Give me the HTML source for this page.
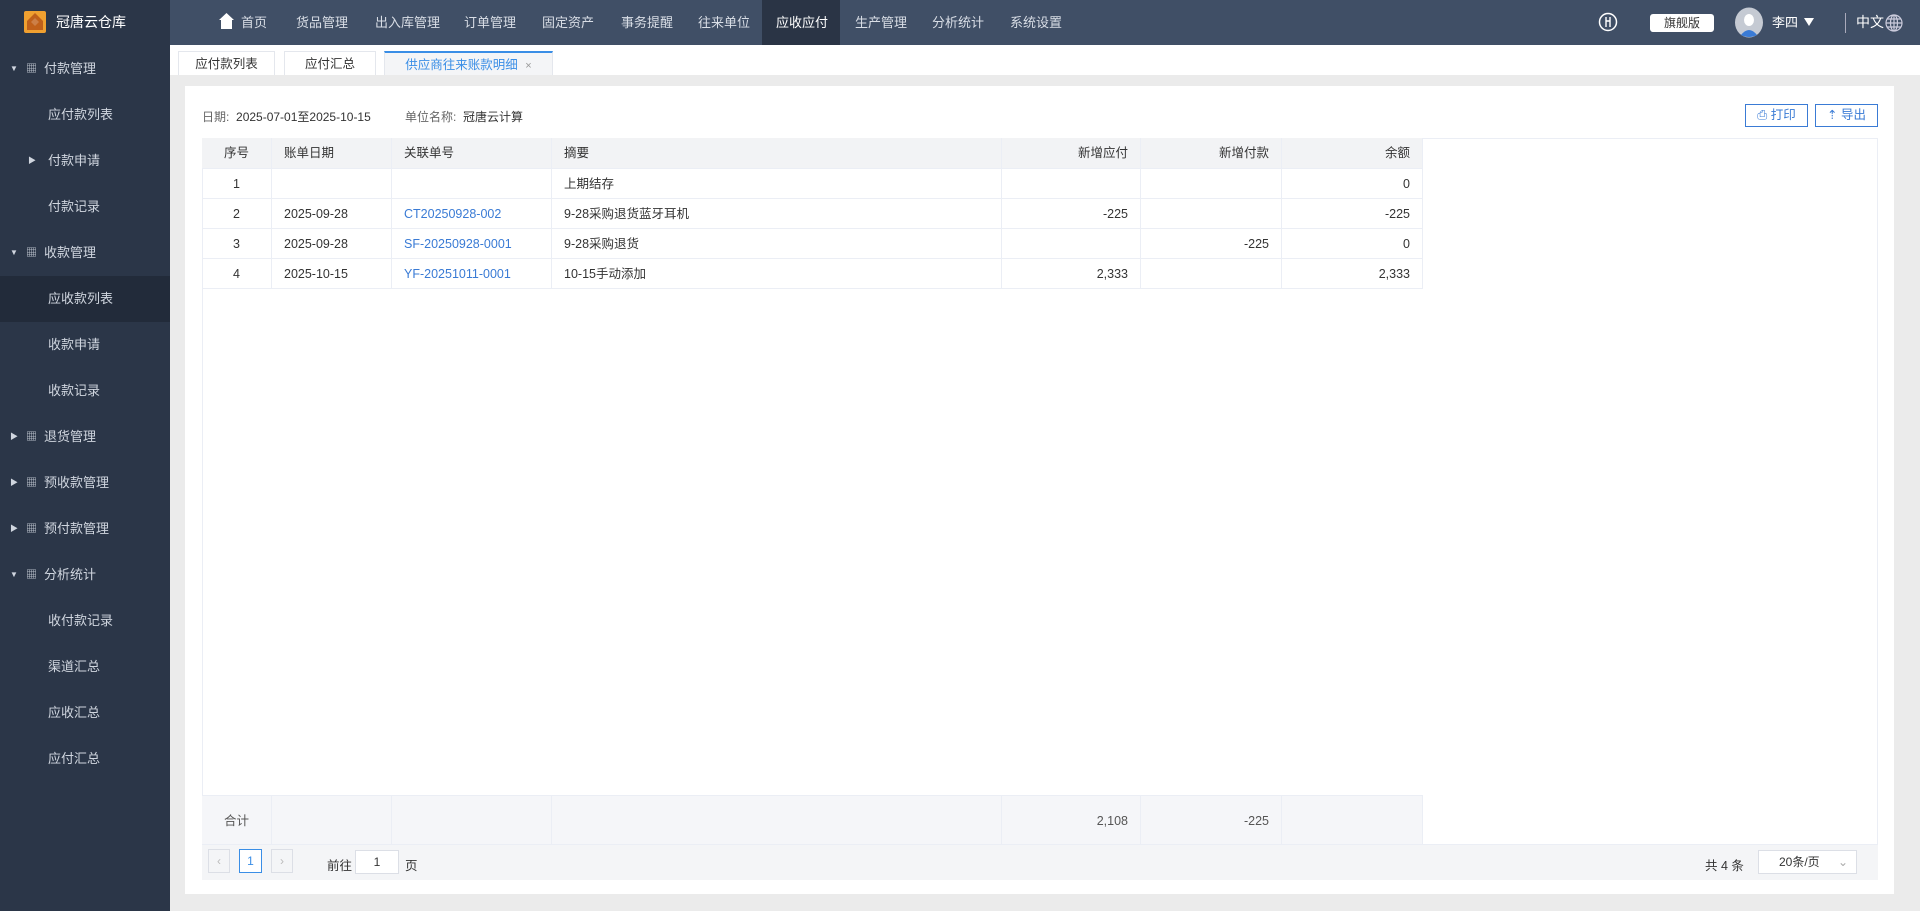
<!DOCTYPE html>
<html><head><meta charset="utf-8"><style>
*{box-sizing:border-box;margin:0;padding:0}
body{width:1920px;height:911px;overflow:hidden;font-family:"Liberation Sans","Noto Sans CJK SC",sans-serif;font-size:13px;color:#333;background:#ebebeb;position:relative}
.top{position:absolute;left:0;top:0;width:1920px;height:45px;background:#404f66}
.logo{position:absolute;left:0;top:0;width:170px;height:45px;background:#2b3648;color:#fff;font-size:14px}
.nav span{position:absolute;top:0;height:45px;line-height:45px;color:#d9dee6;font-size:13px}
.side{position:absolute;left:0;top:45px;width:170px;height:866px;background:#2b3648}
.si{position:absolute;left:0;width:170px;height:46px;line-height:46px;color:#d0d6df;font-size:13px}
.tabs{position:absolute;left:170px;top:45px;width:1750px;height:30px;background:#fff}
.tab{position:absolute;top:51px;height:24px;line-height:24px;text-align:center;border:1px solid #e4e7ed;border-bottom:none;font-size:12.5px;color:#333;background:#fff}
.panel{position:absolute;left:185px;top:86px;width:1709px;height:808px;background:#fff}
.abs{position:absolute}
.btn{position:absolute;top:104px;height:23px;border:1px solid #3a7bd5;color:#3a7bd5;font-size:12.5px;line-height:21px;text-align:center}
.cell{position:absolute;height:30px;line-height:30px;font-size:12.5px;padding:0 12px;border-right:1px solid #ebeef5;border-bottom:1px solid #ebeef5}
.lk{color:#3a7bd5}
</style></head><body>
<div class="top"></div>
<div class="logo"><svg style="position:absolute;left:24px;top:11px" width="22" height="22" viewBox="0 0 22 22"><rect width="22" height="22" rx="2" fill="#f0a030"/><path d="M11 2 L19 10 L19 19 L3 19 L3 10Z" fill="#c0601a"/><path d="M11 7 L15 11 L11 15 L7 11Z" fill="#fff3"/></svg><span style="position:absolute;left:56px;top:0;line-height:45px;font-size:14px">冠唐云仓库</span></div>
<div style="position:absolute;left:762px;top:0;width:78px;height:45px;background:#2a3445"></div>
<svg style="position:absolute;left:219px;top:13px" width="15" height="16" viewBox="0 0 15 16"><path d="M7.5 0 L15 7 L13 7 L13 16 L2 16 L2 7 L0 7Z" fill="#fff"/></svg>
<div class="nav">
<span style="left:241px">首页</span><span style="left:296px">货品管理</span><span style="left:375px">出入库管理</span><span style="left:464px">订单管理</span><span style="left:542px">固定资产</span><span style="left:621px">事务提醒</span><span style="left:698px">往来单位</span><span style="left:776px;color:#fff">应收应付</span><span style="left:855px">生产管理</span><span style="left:932px">分析统计</span><span style="left:1010px">系统设置</span>
</div>
<svg style="position:absolute;left:1598px;top:12px" width="20" height="20" viewBox="0 0 20 20"><circle cx="10" cy="10" r="8.5" fill="none" stroke="#fff" stroke-width="1.5"/><path d="M8 5v10M12 5v10M8 9h4" stroke="#fff" stroke-width="1.4" fill="none"/></svg>
<div style="position:absolute;left:1650px;top:14px;width:64px;height:18px;background:#fff;border-radius:3px;text-align:center;line-height:18px;font-size:12px;color:#333">旗舰版</div>
<svg style="position:absolute;left:1734px;top:7px" width="30" height="31" viewBox="0 0 30 31"><ellipse cx="15" cy="15.5" rx="14" ry="15" fill="#c5cad3"/><ellipse cx="15" cy="13" rx="5" ry="6" fill="#fff"/><path d="M7 28 Q15 18 23 28 Q15 32 7 28Z" fill="#3a7bd5"/></svg>
<span style="position:absolute;left:1772px;top:0;line-height:45px;color:#fff;font-size:13px">李四</span>
<svg style="position:absolute;left:1804px;top:18px" width="10" height="8"><path d="M0 0H10L5 8Z" fill="#fff"/></svg>
<div style="position:absolute;left:1845px;top:13px;width:1px;height:20px;background:#aab"></div>
<span style="position:absolute;left:1856px;top:0;line-height:45px;color:#fff;font-size:14px">中文</span>
<svg style="position:absolute;left:1885px;top:14px" width="18" height="18" viewBox="0 0 18 18" fill="none" stroke="#ccd" stroke-width="1.2"><circle cx="9" cy="9" r="8"/><ellipse cx="9" cy="9" rx="3.5" ry="8"/><path d="M1 9h16M2.5 5h13M2.5 13h13M9 1v16"/></svg>

<div class="side">
<div class="si" style="top:1px"><span style="position:absolute;left:10px;font-size:8px">▼</span><span style="position:absolute;left:26px;font-size:11px">▦</span><span style="position:absolute;left:44px">付款管理</span></div>
<div class="si" style="top:47px"><span style="position:absolute;left:48px">应付款列表</span></div>
<div class="si" style="top:93px"><span style="position:absolute;left:28px;font-size:8px">▶</span><span style="position:absolute;left:48px">付款申请</span></div>
<div class="si" style="top:139px"><span style="position:absolute;left:48px">付款记录</span></div>
<div class="si" style="top:185px"><span style="position:absolute;left:10px;font-size:8px">▼</span><span style="position:absolute;left:26px;font-size:11px">▦</span><span style="position:absolute;left:44px">收款管理</span></div>
<div class="si" style="top:231px;background:#222b3a"><span style="position:absolute;left:48px">应收款列表</span></div>
<div class="si" style="top:277px"><span style="position:absolute;left:48px">收款申请</span></div>
<div class="si" style="top:323px"><span style="position:absolute;left:48px">收款记录</span></div>
<div class="si" style="top:369px"><span style="position:absolute;left:10px;font-size:8px">▶</span><span style="position:absolute;left:26px;font-size:11px">▦</span><span style="position:absolute;left:44px">退货管理</span></div>
<div class="si" style="top:415px"><span style="position:absolute;left:10px;font-size:8px">▶</span><span style="position:absolute;left:26px;font-size:11px">▦</span><span style="position:absolute;left:44px">预收款管理</span></div>
<div class="si" style="top:461px"><span style="position:absolute;left:10px;font-size:8px">▶</span><span style="position:absolute;left:26px;font-size:11px">▦</span><span style="position:absolute;left:44px">预付款管理</span></div>
<div class="si" style="top:507px"><span style="position:absolute;left:10px;font-size:8px">▼</span><span style="position:absolute;left:26px;font-size:11px">▦</span><span style="position:absolute;left:44px">分析统计</span></div>
<div class="si" style="top:553px"><span style="position:absolute;left:48px">收付款记录</span></div>
<div class="si" style="top:599px"><span style="position:absolute;left:48px">渠道汇总</span></div>
<div class="si" style="top:645px"><span style="position:absolute;left:48px">应收汇总</span></div>
<div class="si" style="top:691px"><span style="position:absolute;left:48px">应付汇总</span></div>
</div>

<div class="tabs"></div>
<div class="tab" style="left:178px;width:97px">应付款列表</div>
<div class="tab" style="left:284px;width:92px">应付汇总</div>
<div class="tab" style="left:384px;width:169px;border-top:2px solid #3a8ee6;color:#3a8ee6;background:#f4f5f7">供应商往来账款明细 <span style="color:#999;font-size:11px;margin-left:4px">×</span></div>

<div class="panel"></div>
<span class="abs" style="left:202px;top:108px;font-size:12px;color:#666">日期: &nbsp;<span style="color:#333">2025-07-01至2025-10-15</span></span>
<span class="abs" style="left:405px;top:108px;font-size:12px;color:#666">单位名称: &nbsp;<span style="color:#333">冠唐云计算</span></span>
<div class="btn" style="left:1745px;width:63px">⎙ 打印</div>
<div class="btn" style="left:1815px;width:63px">⇡ 导出</div>

<div class="abs" style="left:202px;top:138px;width:1676px;height:707px;border:1px solid #ebeef5"></div>
<div class="abs" style="left:202px;top:138px;width:1221px;height:31px;background:#f2f3f5"></div>
<div class="abs" style="left:202px;top:795px;width:1221px;height:50px;background:#f5f6f9"></div>

<div id="t"></div>
<script>
var cols=[202,272,392,552,1002,1141,1282,1423];
var al=['c','l','l','l','r','r','r'];
var rows=[["序号","账单日期","关联单号","摘要","新增应付","新增付款","余额"],
["1","","","上期结存","","","0"],
["2","2025-09-28","CT20250928-002","9-28采购退货蓝牙耳机","-225","","-225"],
["3","2025-09-28","SF-20250928-0001","9-28采购退货","","-225","0"],
["4","2025-10-15","YF-20251011-0001","10-15手动添加","2,333","","2,333"]];
var ys=[138,169,199,229,259];
var h='';
rows.forEach(function(r,i){r.forEach(function(v,j){
var s='left:'+cols[j]+'px;top:'+ys[i]+'px;width:'+(cols[j+1]-cols[j])+'px;height:'+(i==0?31:30)+'px;text-align:'+(al[j]=='c'?'center':al[j]=='r'?'right':'left')+';';
h+='<div class="cell'+(j==2&&i>0?' lk':'')+'" style="'+s+'">'+v+'</div>';});});
var f=["合计","","","","2,108","-225",""];
f.forEach(function(v,j){h+='<div class="cell" style="left:'+cols[j]+'px;top:795px;height:50px;line-height:50px;color:#555;width:'+(cols[j+1]-cols[j])+'px;text-align:'+(j==0?'center':'right')+';border-top:1px solid #ebeef5">'+v+'</div>';});
document.getElementById('t').innerHTML=h;
</script>

<div class="abs" style="left:202px;top:845px;width:1676px;height:35px;background:#f4f5f7"></div>
<div class="abs" style="left:208px;top:849px;width:22px;height:24px;border:1px solid #dcdfe6;background:#f4f5f7;color:#bbb;text-align:center;line-height:22px;font-size:12px">‹</div>
<div class="abs" style="left:239px;top:849px;width:23px;height:24px;border:1px solid #3a8ee6;background:#fff;color:#3a8ee6;text-align:center;line-height:22px;font-size:12px">1</div>
<div class="abs" style="left:271px;top:849px;width:22px;height:24px;border:1px solid #dcdfe6;background:#f4f5f7;color:#bbb;text-align:center;line-height:22px;font-size:12px">›</div>
<span class="abs" style="left:327px;top:855px;font-size:12.5px">前往</span>
<div class="abs" style="left:355px;top:850px;width:44px;height:24px;border:1px solid #dcdfe6;background:#fff;text-align:center;line-height:22px;font-size:12px">1</div>
<span class="abs" style="left:405px;top:855px;font-size:12.5px">页</span>
<span class="abs" style="left:1705px;top:855px;font-size:12.5px">共 4 条</span>
<div class="abs" style="left:1758px;top:850px;width:99px;height:24px;border:1px solid #dcdfe6;background:#fff;line-height:22px;font-size:12px;padding-left:20px">20条/页<span style="position:absolute;right:8px;color:#aaa">⌄</span></div>
</body></html>
